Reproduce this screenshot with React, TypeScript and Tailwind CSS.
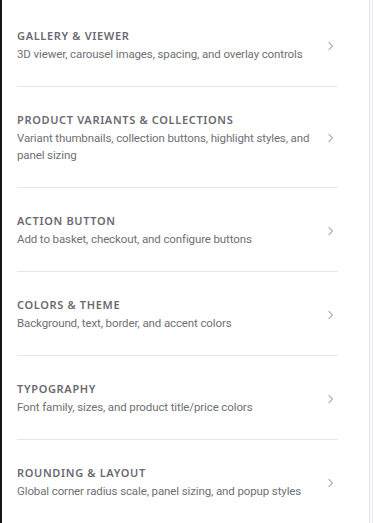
import React from "react";

interface Section {
  title: string;
  description: string;
}

const sections: Section[] = [
  {
    title: "Gallery & Viewer",
    description: "3D viewer, carousel images, spacing, and overlay controls",
  },
  {
    title: "Product Variants & Collections",
    description:
      "Variant thumbnails, collection buttons, highlight styles, and panel sizing",
  },
  {
    title: "Action Button",
    description: "Add to basket, checkout, and configure buttons",
  },
  {
    title: "Colors & Theme",
    description: "Background, text, border, and accent colors",
  },
  {
    title: "Typography",
    description: "Font family, sizes, and product title/price colors",
  },
  {
    title: "Rounding & Layout",
    description: "Global corner radius scale, panel sizing, and popup styles",
  },
];

const Chevron = () => (
  <svg
    width="6"
    height="10"
    viewBox="0 0 6 10"
    fill="none"
    className="shrink-0 mr-[4px]"
  >
    <path
      d="M1 1.5 4.5 5 1 8.5"
      stroke="#b4b4b8"
      strokeWidth="1.2"
      strokeLinecap="round"
      strokeLinejoin="round"
    />
  </svg>
);

export default function App() {
  return (
    <div className="flex h-[523px] w-[373px] bg-white overflow-hidden">
      {/* Settings list */}
      <div className="w-[353px] shrink-0 border-l-2 border-[#161616] pt-[3px]">
        {sections.map((s, i) => (
          <div key={s.title} className="px-[15px]">
            <button
              className={`w-full flex items-center gap-4 text-left pt-[25px] pb-[23px] ${
                i < sections.length - 1 ? "border-b border-[#e6e6e9]" : ""
              }`}
            >
              <div className="flex-1 min-w-0">
                <h3 className="font-['Noto_Sans',sans-serif] text-[11px] leading-4 font-semibold uppercase tracking-[0.06em] text-[#6a6a72]">
                  {s.title}
                </h3>
                <p className="mt-[2px] font-['Roboto',sans-serif] text-[11.5px] leading-[17px] tracking-[-0.01em] text-[#707074]">
                  {s.description}
                </p>
              </div>
              <Chevron />
            </button>
          </div>
        ))}
      </div>

      {/* Scroll track */}
      <div className="flex-1 flex justify-end">
        <div className="w-px bg-[#e4e4e6]" />
        <div className="w-[2px] bg-[#fafafa]" />
        <div className="w-px bg-[#ececee]" />
      </div>
    </div>
  );
}
